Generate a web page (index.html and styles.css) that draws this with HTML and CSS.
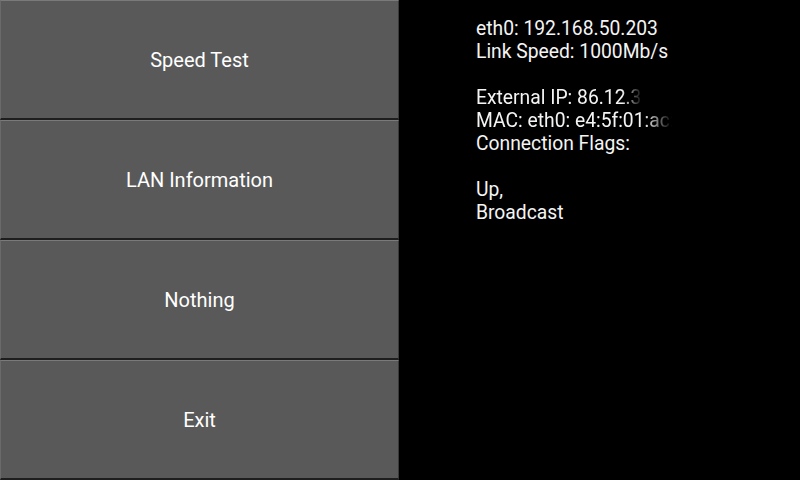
FILE: index.html
```html
<!DOCTYPE html>
<html lang="en">
<head>
  <meta charset="UTF-8">
  <meta name="viewport" content="width=device-width, initial-scale=1.0">
  <title>Network Tools</title>
  <link rel="stylesheet" href="styles.css">
</head>
<body>
  <div class="menu">
    <button class="menu-btn">Speed Test</button>
    <button class="menu-btn">LAN Information</button>
    <button class="menu-btn">Nothing</button>
    <button class="menu-btn">Exit</button>
  </div>

  <div class="info">
    <div class="line">eth0: 192.168.50.203</div>
    <div class="line">Link Speed: 1000Mb/s</div>
    <div class="line"></div>
    <div class="line fade-ip">External IP: 86.12.3</div>
    <div class="line fade-mac">MAC: eth0: e4:5f:01:ac:</div>
    <div class="line">Connection Flags:</div>
    <div class="line"></div>
    <div class="line">Up,</div>
    <div class="line">Broadcast</div>
  </div>
</body>
</html>
```

FILE: styles.css
```css
body {
  margin: 0;
  padding: 0;
  width: 800px;
  height: 480px;
  overflow: hidden;
  background-color: #000;
  font-family: Roboto, "Liberation Sans", sans-serif;
  color: #fff;
  display: flex;
}

.menu {
  width: 399px;
  display: flex;
  flex-direction: column;
}

.menu-btn {
  height: 120px;
  padding: 0;
  border-top: 1px solid #7a7a7a;
  border-left: 1px solid #6a6a6a;
  border-right: 1px solid #3a3a3a;
  border-bottom: 2px solid #1e1e1e;
  background-color: #595959;
  color: #fff;
  font-family: Roboto, "Liberation Sans", sans-serif;
  font-size: 20px;
}

.info {
  padding: 17px 0 0 77px;
  width: 198px;
  font-size: 19.3px;
  line-height: 23px;
  color: #f4f4f4;
}

.line {
  height: 23px;
  white-space: nowrap;
  overflow: hidden;
}

.fade-ip {
  -webkit-mask-image: linear-gradient(to right, #000 146px, transparent 166px);
  mask-image: linear-gradient(to right, #000 146px, transparent 166px);
}

.fade-mac {
  -webkit-mask-image: linear-gradient(to right, #000 168px, transparent 196px);
  mask-image: linear-gradient(to right, #000 168px, transparent 196px);
}
```
